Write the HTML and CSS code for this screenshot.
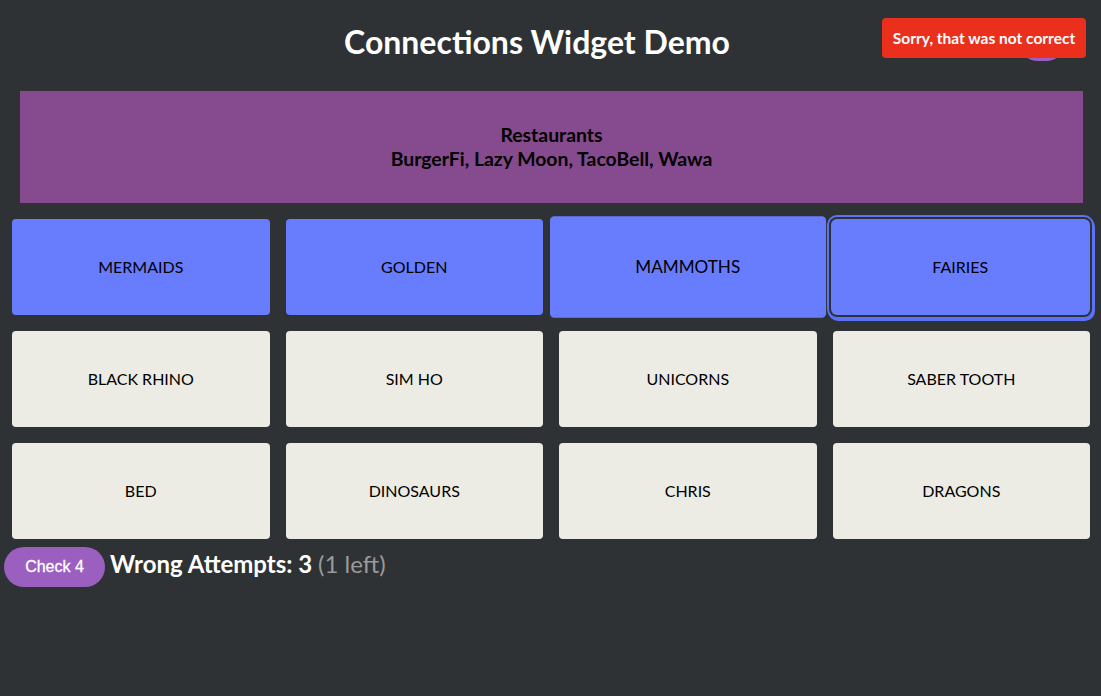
FILE: index.html
```html
<!DOCTYPE html>
<html lang="en">
<head>
<meta charset="utf-8">
<title>Connections Widget Demo</title>
<link rel="stylesheet" href="styles.css">
</head>
<body>
<header class="header">
  <h1 class="title">Connections Widget Demo</h1>
  <button class="corner-btn" aria-label="Shuffle"></button>
  <div class="toast">Sorry, that was not correct</div>
</header>
<main class="board">
  <section class="solved">
    <div class="solved-name">Restaurants</div>
    <div class="solved-items">BurgerFi, Lazy Moon, TacoBell, Wawa</div>
  </section>
  <div class="grid">
    <button class="tile selected">MERMAIDS</button>
    <button class="tile selected">GOLDEN</button>
    <button class="tile selected hovered">MAMMOTHS</button>
    <button class="tile selected focused">FAIRIES</button>
    <button class="tile">BLACK RHINO</button>
    <button class="tile">SIM HO</button>
    <button class="tile">UNICORNS</button>
    <button class="tile">SABER TOOTH</button>
    <button class="tile">BED</button>
    <button class="tile">DINOSAURS</button>
    <button class="tile">CHRIS</button>
    <button class="tile">DRAGONS</button>
  </div>
</main>
<footer class="controls">
  <button class="check-btn">Check 4</button>
  <span class="attempts">Wrong Attempts: 3 <span class="left">(1 left)</span></span>
</footer>
</body>
</html>
```
FILE: styles.css
```css
* { box-sizing: border-box; }
html, body { margin: 0; padding: 0; }
body {
  background: #2e3235;
  font-family: Lato, "Noto Sans", sans-serif;
  color: #fff;
  width: 1101px;
  height: 696px;
  overflow: hidden;
}
.header {
  position: relative;
  height: 91px;
  padding-top: 22px;
}
.title {
  margin: 0;
  text-align: center;
  font-size: 32px;
  line-height: 40px;
  font-weight: 700;
  color: #fff;
  padding-right: 27px;
}
.corner-btn {
  position: absolute;
  top: 21px;
  left: 1018px;
  width: 48px;
  height: 40px;
  border: none;
  border-radius: 20px;
  background: #9b5fc0;
}
.toast {
  position: absolute;
  top: 18px;
  left: 882px;
  width: 204px;
  height: 40px;
  border-radius: 4px;
  background: #ea2f1c;
  color: #fff;
  font-family: Lato, "Noto Sans", sans-serif;
  font-size: 15.5px;
  font-weight: 700;
  line-height: 40px;
  text-align: center;
}
.board {
  padding: 0 11px 0 12px;
}
.solved {
  margin: 0 7px 0 8px;
  height: 112px;
  background: #864b8e;
  color: #000;
  text-align: center;
  font-weight: 700;
  font-size: 19.4px;
  line-height: 24px;
  padding-top: 32px;
}
.grid {
  margin-top: 16px;
  display: grid;
  grid-template-columns: repeat(4, 1fr);
  grid-auto-rows: 96px;
  gap: 16px;
}
.tile {
  border: none;
  border-radius: 4px;
  background: #ececE4;
  color: #000;
  font-family: Lato, "Noto Sans", sans-serif;
  font-size: 16px;
  text-transform: uppercase;
  padding: 0 0 2px;
}
.tile.selected {
  background: #687cfe;
}
.tile.hovered {
  transform: scale(1.07, 1.055);
}
.tile.focused {
  margin-left: -2px;
  border-radius: 6px;
  box-shadow: 0 0 0 2px #2e3235, 0 0 0 4px #5a72f5, 1px 2px 0 4px #5a72f5;
}
.controls {
  display: flex;
  align-items: center;
  gap: 5px;
  padding: 8px 0 0 4px;
}
.check-btn {
  height: 40px;
  width: 101px;
  border: none;
  border-radius: 20px;
  background: #9b5fc0;
  color: #fff;
  font-family: "Liberation Sans", Arial, sans-serif;
  font-size: 16px;
  padding: 0;
  -webkit-text-stroke: 0.3px #fff;
}
.attempts {
  font-size: 24px;
  font-weight: 700;
  color: #fff;
  line-height: 30px;
  margin-top: -6px;
}
.left {
  color: #9a9a9a;
  font-weight: 400;
}
```
